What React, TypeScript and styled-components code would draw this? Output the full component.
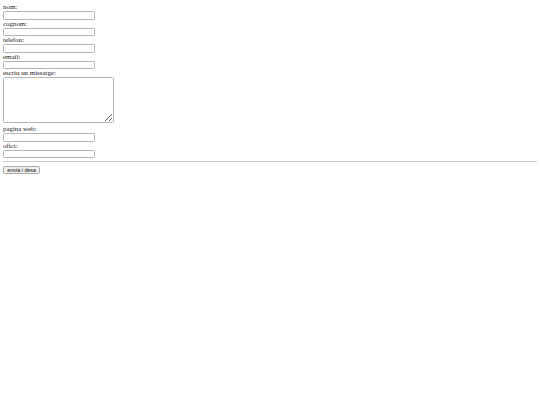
import React from "react";
import styled, { createGlobalStyle } from "styled-components";

const GlobalStyle = createGlobalStyle`
  html, body {
    margin: 0;
    padding: 0;
    background: #ffffff;
  }
  body {
    font-family: "Liberation Serif", "Times New Roman", serif;
    color: #000000;
  }
`;

const fields = [
  { id: "nom", label: "nom:" },
  { id: "cognom", label: "cognom:" },
  { id: "telefon", label: "telefon:" },
  { id: "email", label: "email:" },
];

const lateFields = [
  { id: "web", label: "pagina web:" },
  { id: "ofici", label: "ofici:" },
];

const Page = styled.div`
  padding: 3px 3px 0 3px;
`;

const Form = styled.form`
  display: flex;
  flex-direction: column;
  align-items: flex-start;
`;

const Label = styled.label`
  display: block;
  font-size: 6.9px;
  line-height: 8px;
  height: 8px;
  color: #222222;
`;

const TextInput = styled.input`
  box-sizing: border-box;
  width: 92px;
  height: 8.5px;
  margin: 0;
  padding: 0 1px;
  border: 1px solid #b4b4b4;
  border-radius: 1.5px;
  background: #ffffff;
  font-size: 5px;
`;

const MessageArea = styled.textarea`
  box-sizing: border-box;
  width: 110.5px;
  height: 46px;
  margin: 0 0 2px 0;
  padding: 1px;
  border: 1px solid #b4b4b4;
  border-radius: 1.5px;
  background: #ffffff;
  font-size: 5px;
  resize: both;
`;

const Rule = styled.hr`
  align-self: stretch;
  margin: 2.5px 0 4px 0;
  height: 0;
  border: none;
  border-top: 1px solid #cccccc;
`;

const SubmitButton = styled.button`
  box-sizing: border-box;
  height: 8.5px;
  padding: 0 3.3px;
  margin: 0;
  border: 1px solid #a8a8a8;
  border-radius: 1.5px;
  background: #efefef;
  font-family: "Liberation Sans", Arial, sans-serif;
  font-size: 5.4px;
  line-height: 6px;
  color: #111111;
`;

export default function App() {
  return (
    <>
      <GlobalStyle />
      <Page>
        <Form onSubmit={(e) => e.preventDefault()}>
          {fields.map((f) => (
            <React.Fragment key={f.id}>
              <Label htmlFor={f.id}>{f.label}</Label>
              <TextInput id={f.id} type="text" />
            </React.Fragment>
          ))}
          <Label htmlFor="missatge">escriu un missatge:</Label>
          <MessageArea id="missatge" />
          {lateFields.map((f) => (
            <React.Fragment key={f.id}>
              <Label htmlFor={f.id}>{f.label}</Label>
              <TextInput id={f.id} type="text" />
            </React.Fragment>
          ))}
          <Rule />
          <SubmitButton type="submit">envia i desa</SubmitButton>
        </Form>
      </Page>
    </>
  );
}
